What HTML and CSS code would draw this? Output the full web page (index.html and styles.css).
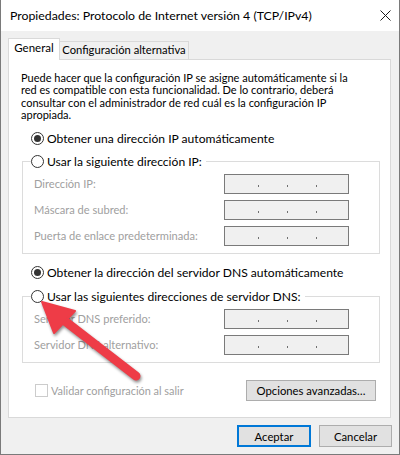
FILE: index.html
```html
<!DOCTYPE html>
<html lang="es">
<head>
    <meta charset="UTF-8">
    <title>Propiedades: Protocolo de Internet versión 4 (TCP/IPv4)</title>
    <link rel="stylesheet" href="styles.css">
</head>
<body>
    <div class="window">
        <div class="titlebar">
            <span class="title">Propiedades: Protocolo de Internet versión 4 (TCP/IPv4)</span>
            <svg class="close" width="11" height="11" viewBox="0 0 11 11">
                <path d="M0.5 0.5 L10.5 10.5 M10.5 0.5 L0.5 10.5" stroke="#1a1a1a" stroke-width="1" fill="none"/>
            </svg>
        </div>

        <div class="tabs">
            <div class="tab active">General</div>
            <div class="tab">Configuración alternativa</div>
        </div>

        <div class="panel">
            <p class="intro">Puede hacer que la configuración IP se asigne automáticamente si la<br>red es compatible con esta funcionalidad. De lo contrario, deberá<br>consultar con el administrador de red cuál es la configuración IP<br>apropiada.</p>

            <div class="option first"><span class="radio checked"></span>Obtener una dirección IP automáticamente</div>
            <div class="group">
                <div class="option head"><span class="radio"></span>Usar la siguiente dirección IP:</div>
                <div class="fields">
                    <div class="field"><span>Dirección IP:</span><span class="ipbox"><i></i><i></i><i></i></span></div>
                    <div class="field"><span>Máscara de subred:</span><span class="ipbox"><i></i><i></i><i></i></span></div>
                    <div class="field"><span>Puerta de enlace predeterminada:</span><span class="ipbox"><i></i><i></i><i></i></span></div>
                </div>
            </div>

            <div class="option dns"><span class="radio checked"></span>Obtener la dirección del servidor DNS automáticamente</div>
            <div class="group second">
                <div class="option head"><span class="radio"></span>Usar las siguientes direcciones de servidor DNS:</div>
                <div class="fields">
                    <div class="field"><span>Servidor DNS preferido:</span><span class="ipbox"><i></i><i></i><i></i></span></div>
                    <div class="field"><span>Servidor DNS alternativo:</span><span class="ipbox"><i></i><i></i><i></i></span></div>
                </div>
            </div>

            <div class="panel-foot">
                <div class="check"><span class="box"></span>Validar configuración al salir</div>
                <button class="btn advanced">Opciones avanzadas…</button>
            </div>
        </div>

        <div class="footer">
            <button class="btn default">Aceptar</button>
            <button class="btn">Cancelar</button>
        </div>

        <!-- flecha roja encima del diálogo -->
        <svg class="arrow" width="400" height="455" viewBox="0 0 400 455">
            <line x1="61" y1="318" x2="136" y2="376" stroke="#ee3c47" stroke-width="9" stroke-linecap="round"/>
            <polygon points="42,302 54,333 75,311" fill="#ee3c47" stroke="#ee3c47" stroke-width="2" stroke-linejoin="round"/>
        </svg>
    </div>
</body>
</html>
```

FILE: styles.css
```css
body {
    margin: 0;
    background-color: #fff;
    font-family: Lato, "Noto Sans", sans-serif;
    font-size: 11.2px;
    color: #000;
}

.window {
    position: relative;
    width: 400px;
    height: 455px;
    box-sizing: border-box;
    background-color: #f0f0f0;
    border: 1px solid #7a7a7a;
    border-top: none;
}

.titlebar {
    height: 31px;
    background-color: #fff;
    display: flex;
    align-items: center;
    justify-content: space-between;
    padding: 0 8px 0 9px;
    font-size: 12.3px;
}

.close {
    display: block;
}

/* Pestañas */
.tabs {
    display: flex;
    align-items: flex-end;
    height: 21px;
    margin: 7px 0 0 7px;
}

.tab {
    height: 18px;
    box-sizing: border-box;
    border: 1px solid #d9d9d9;
    border-bottom: none;
    width: 130px;
    margin-left: -1px;
    text-align: center;
    line-height: 16px;
    white-space: nowrap;
}

.tab.active {
    position: relative;
    z-index: 1;
    width: 52px;
    height: 22px;
    margin-left: 0;
    margin-bottom: -1px;
    padding-top: 1px;
    background-color: #fff;
    font-size: 11.5px;
}

.panel {
    margin-left: 7px;
    width: 383px;
    height: 359px;
    box-sizing: border-box;
    border: 1px solid #d9d9d9;
    background-color: #fff;
}

.intro {
    margin: 12px 4px 0 12px;
    font-size: 11px;
    line-height: 12.4px;
    white-space: nowrap;
}

.option {
    display: flex;
    align-items: center;
    height: 18px;
    font-size: 12.1px;
    white-space: nowrap;
}

.option.first {
    margin-top: 8px;
    padding-left: 22px;
}

.option.dns {
    margin-top: 10px;
    padding-left: 22px;
}

.radio {
    width: 13px;
    height: 13px;
    box-sizing: border-box;
    border: 1px solid #333;
    border-radius: 50%;
    margin-right: 3px;
    display: flex;
    align-items: center;
    justify-content: center;
    flex-shrink: 0;
}

.radio.checked::after {
    content: "";
    width: 7px;
    height: 7px;
    border-radius: 50%;
    background-color: #333;
}

.group {
    margin: 13px 10px 0 13px;
    border: 1px solid #dcdcdc;
}

.group.second {
    margin-top: 14px;
}

.option.head {
    margin: -9px 0 0 8px;
    width: fit-content;
    padding-right: 4px;
    background-color: #fff;
}

.fields {
    display: flex;
    flex-direction: column;
    gap: 6px;
    margin-top: 3px;
    padding: 0 30px 7px 11px;
}

.field {
    display: flex;
    align-items: center;
    justify-content: space-between;
    color: #a0a0a0;
    white-space: nowrap;
    font-size: 11.1px;
}

.ipbox {
    width: 125px;
    height: 20px;
    box-sizing: border-box;
    border: 1px solid #7a7a7a;
    background-color: #f0f0f0;
    display: flex;
    gap: 28px;
    padding-left: 33px;
}

.ipbox i {
    width: 1px;
    height: 2px;
    margin-top: 10px;
    background-color: #6f6f6f;
}

.panel-foot {
    display: flex;
    align-items: center;
    justify-content: space-between;
    height: 22px;
    margin-top: 17px;
    padding: 0 14px 0 26px;
}

.check {
    display: flex;
    align-items: center;
    color: #a0a0a0;
    white-space: nowrap;
    font-size: 10.9px;
}

.check .box {
    width: 13px;
    height: 13px;
    box-sizing: border-box;
    border: 1px solid #cccccc;
    margin-right: 3px;
}

.btn {
    font-family: inherit;
    font-size: 11.3px;
    color: #000;
    height: 22px;
    padding: 0;
    background-color: #e1e1e1;
    border: 1px solid #adadad;
    border-radius: 0;
}

.btn.advanced {
    width: 130px;
    height: 21px;
}

.footer {
    display: flex;
    justify-content: flex-end;
    gap: 8px;
    margin-top: 7px;
    padding-right: 7px;
}

.footer .btn {
    width: 73px;
}

.btn.default {
    width: 74px;
    border: 2px solid #0078d7;
}

.arrow {
    position: absolute;
    top: 0;
    left: -1px;
    pointer-events: none;
    filter: drop-shadow(1px 2px 1.5px rgba(0, 0, 0, 0.45));
}
```
